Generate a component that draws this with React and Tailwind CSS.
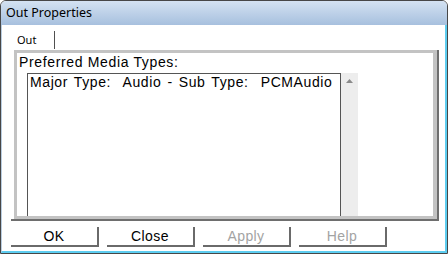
import React from 'react';

// Out Properties dialog (DirectShow style property page)
const buttons = [
  { label: 'OK', enabled: true },
  { label: 'Close', enabled: true },
  { label: 'Apply', enabled: false },
  { label: 'Help', enabled: false },
];

const App = () => {
  return (
    <div className="w-[448px] h-[254px] bg-white overflow-hidden">
      <div className="w-full h-full flex flex-col border border-[#474747] rounded-t-[6px] overflow-hidden">
        {/* title bar */}
        <div className="h-[24px] shrink-0 flex items-center pl-[5px] bg-gradient-to-b from-[#d4e2f2] to-[#a7c0de] font-['Noto_Sans',sans-serif] text-[12.5px] text-black">
          Out Properties
        </div>

        <div className="flex-1 flex flex-col border-r-2 border-b-2 border-l border-l-[#b9cde0] border-r-[#5dcdf0] border-b-[#5dcdf0] bg-white">
          {/* tab strip */}
          <div className="h-[25px] shrink-0 flex items-end">
            <div className="ml-[8px] w-[45px] h-[18px] flex items-center pl-[7px] border-r border-[#505050] font-['Noto_Sans',sans-serif] text-[11px] text-black mb-[1px]">
              Out
            </div>
          </div>

          {/* tab page */}
          <div className="ml-[9px] w-[428px] h-[171px] shrink-0 flex flex-col pl-[3px] border-r-2 border-b-2 border-[#6e6e6e]">
            <div className="flex-1 flex flex-col border-[3px] border-r-[4px] border-[#c3c3c3] overflow-hidden font-['Liberation_Sans',sans-serif] text-[14px] text-black">
              <div className="h-[20px] pl-[2px] leading-[19px] tracking-[0.65px]">Preferred Media Types:</div>
              <div className="flex-1 flex pl-[10px]">
                <div className="w-[314px] border-l border-t border-r border-[#555555] pl-[2px] leading-[17px] whitespace-pre tracking-[0.6px] [word-spacing:1.6px]">
                  {'Major Type:  Audio - Sub Type:  PCMAudio'}
                </div>
                <div className="w-[17px] bg-[#ededed] flex justify-center pt-[6px]">
                  <svg width="7" height="4" viewBox="0 0 7 4">
                    <path d="M0 4 L3.5 0 L7 4 Z" fill="#8a8a8a" />
                  </svg>
                </div>
              </div>
            </div>
          </div>

          {/* buttons */}
          <div className="flex-1 flex gap-[8px] pl-[9px] pt-[6px]">
            {buttons.map((btn, i) => (
              <div
                key={i}
                className={`w-[88px] h-[20px] flex items-center justify-center border-r-2 border-b-2 border-[#6a6a6a] font-['Liberation_Sans',sans-serif] text-[14px] tracking-[0.4px] ${btn.enabled ? 'text-black' : 'text-[#a3a3a3]'}`}
              >
                {btn.label}
              </div>
            ))}
          </div>
        </div>
      </div>
    </div>
  );
};

export default App;
